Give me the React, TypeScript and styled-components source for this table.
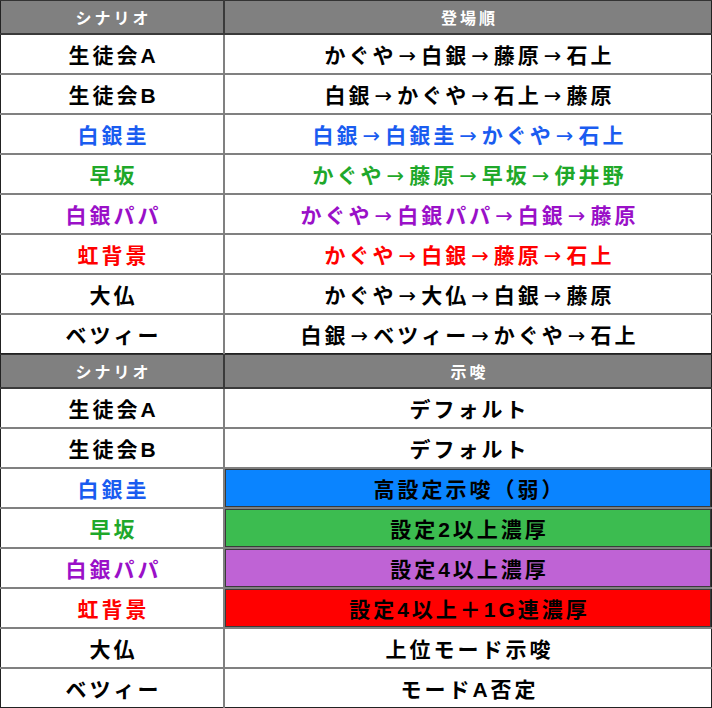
import styled, { createGlobalStyle } from "styled-components";

const GlobalStyle = createGlobalStyle`
  html, body {
    margin: 0;
    padding: 0;
    background: #ffffff;
  }
  body {
    font-family: "Liberation Sans", "Noto Sans CJK JP", sans-serif;
  }
`;

type Tone = "black" | "blue" | "green" | "purple" | "red";

const textColors: Record<Tone, string> = {
  black: "#000000",
  blue: "#1a5cf0",
  green: "#1fa82a",
  purple: "#9a10c8",
  red: "#ff0000",
};

const fillColors: Record<Tone, string> = {
  black: "#ffffff",
  blue: "#0a84ff",
  green: "#3cbc50",
  purple: "#bf63d5",
  red: "#ff0000",
};

const Page = styled.div`
  width: 712px;
  display: flex;
  flex-direction: column;
`;

const Table = styled.table`
  width: 712px;
  border-collapse: collapse;
  table-layout: fixed;
  border-left: 1px solid #222;
  border-right: 1px solid #222;
`;

const HeadCell = styled.th`
  height: 32px;
  padding: 0 0 0 3px;
  background: #808080;
  color: #ffffff;
  font-size: 16px;
  font-weight: 700;
  letter-spacing: 3px;
  text-align: center;
  border-top: 1px solid #333;
  border-bottom: 2px solid #3a3a3a;
  & + & {
    border-left: 2px solid #3a3a3a;
  }
`;

const Row = styled.tr`
  & + & td {
    border-top: 2px solid #808080;
  }
  &:last-child td {
    border-bottom: 1px solid #222;
  }
`;

const NameCell = styled.td<{ $tone: Tone }>`
  height: 38px;
  width: 219px;
  padding: 0 0 0 3px;
  text-align: center;
  font-size: 21px;
  font-weight: 700;
  letter-spacing: 3px;
  color: ${({ $tone }) => textColors[$tone]};
`;

const ValueCell = styled.td<{ $tone: Tone; $filled?: boolean }>`
  height: 38px;
  padding: 0 0 0 3px;
  text-align: center;
  font-size: 21px;
  font-weight: 700;
  letter-spacing: 3px;
  border-left: 2px solid #808080;
  color: ${({ $tone, $filled }) => ($filled ? "#000000" : textColors[$tone])};
  background: ${({ $tone, $filled }) => ($filled ? fillColors[$tone] : "#ffffff")};
  box-shadow: ${({ $filled }) => ($filled ? "inset 0 0 0 1px #3a3a3a" : "none")};
`;

const Arrow = styled.span`
  font-family: "DejaVu Sans", sans-serif;
  font-size: 21px;
  font-weight: 400;
  letter-spacing: 0;
  margin: 0 5px 0 2px;
`;

type OrderRow = { name: string; tone: Tone; order: string[] };

const orderRows: OrderRow[] = [
  { name: "生徒会A", tone: "black", order: ["かぐや", "白銀", "藤原", "石上"] },
  { name: "生徒会B", tone: "black", order: ["白銀", "かぐや", "石上", "藤原"] },
  { name: "白銀圭", tone: "blue", order: ["白銀", "白銀圭", "かぐや", "石上"] },
  { name: "早坂", tone: "green", order: ["かぐや", "藤原", "早坂", "伊井野"] },
  { name: "白銀パパ", tone: "purple", order: ["かぐや", "白銀パパ", "白銀", "藤原"] },
  { name: "虹背景", tone: "red", order: ["かぐや", "白銀", "藤原", "石上"] },
  { name: "大仏", tone: "black", order: ["かぐや", "大仏", "白銀", "藤原"] },
  { name: "ベツィー", tone: "black", order: ["白銀", "ベツィー", "かぐや", "石上"] },
];

type HintRow = { name: string; tone: Tone; hint: string; filled: boolean };

const hintRows: HintRow[] = [
  { name: "生徒会A", tone: "black", hint: "デフォルト", filled: false },
  { name: "生徒会B", tone: "black", hint: "デフォルト", filled: false },
  { name: "白銀圭", tone: "blue", hint: "高設定示唆（弱）", filled: true },
  { name: "早坂", tone: "green", hint: "設定2以上濃厚", filled: true },
  { name: "白銀パパ", tone: "purple", hint: "設定4以上濃厚", filled: true },
  { name: "虹背景", tone: "red", hint: "設定4以上＋1G連濃厚", filled: true },
  { name: "大仏", tone: "black", hint: "上位モード示唆", filled: false },
  { name: "ベツィー", tone: "black", hint: "モードA否定", filled: false },
];

const Order = ({ names }: { names: string[] }) => (
  <>
    {names.map((n, i) => (
      <span key={i}>
        {i > 0 && <Arrow>→</Arrow>}
        {n}
      </span>
    ))}
  </>
);

export default function App() {
  return (
    <>
      <GlobalStyle />
      <Page>
        <Table>
          <thead>
            <tr>
              <HeadCell style={{ width: 219 }}>シナリオ</HeadCell>
              <HeadCell>登場順</HeadCell>
            </tr>
          </thead>
          <tbody>
            {orderRows.map((r) => (
              <Row key={r.name}>
                <NameCell $tone={r.tone}>{r.name}</NameCell>
                <ValueCell $tone={r.tone}>
                  <Order names={r.order} />
                </ValueCell>
              </Row>
            ))}
          </tbody>
        </Table>
        <Table>
          <thead>
            <tr>
              <HeadCell style={{ width: 219 }}>シナリオ</HeadCell>
              <HeadCell>示唆</HeadCell>
            </tr>
          </thead>
          <tbody>
            {hintRows.map((r) => (
              <Row key={r.name}>
                <NameCell $tone={r.tone}>{r.name}</NameCell>
                <ValueCell $tone={r.tone} $filled={r.filled}>
                  {r.hint}
                </ValueCell>
              </Row>
            ))}
          </tbody>
        </Table>
      </Page>
    </>
  );
}
